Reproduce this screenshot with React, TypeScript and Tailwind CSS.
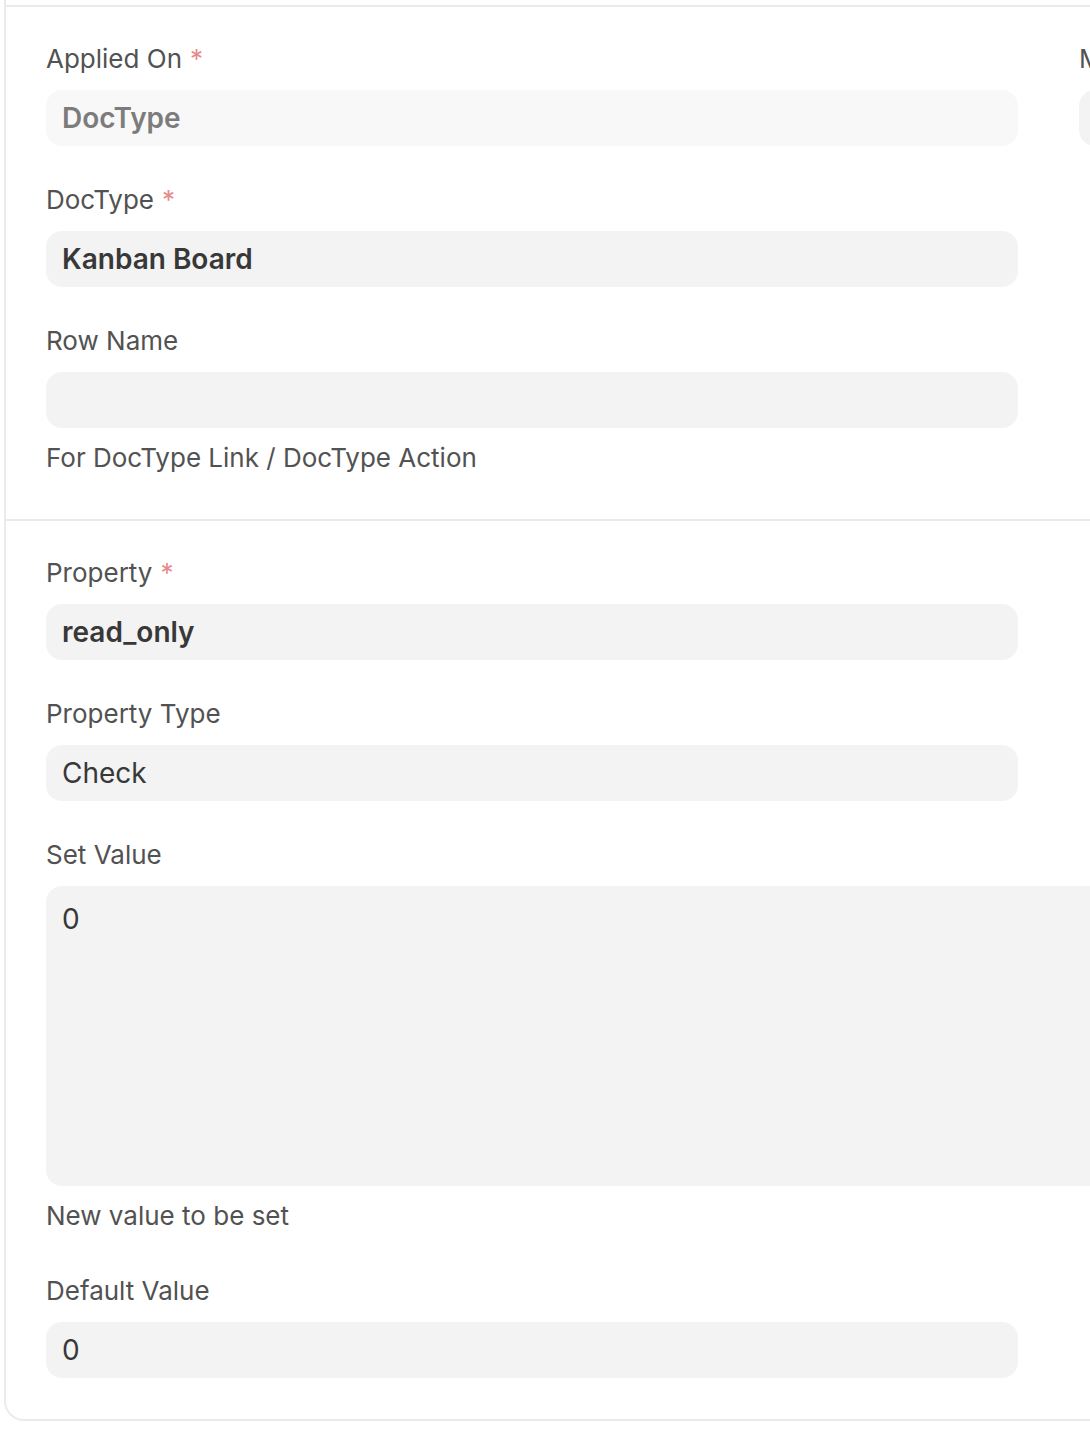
import React from "react";

const font = { fontFamily: "Inter, 'Noto Sans', sans-serif" };

function Label({ text, req }: { text: string; req?: boolean }) {
  return (
    <div className="h-[36px] leading-[36px] text-[26px] text-[#525252] mb-[13px] whitespace-nowrap">
      {text}
      {req && <span className="text-[#e58b8b] ml-[8px]">*</span>}
    </div>
  );
}

function Input({ value, variant }: { value?: string; variant?: "disabled" | "bold" | "normal" }) {
  const cls =
    variant === "disabled"
      ? "bg-[#f8f8f8] text-[#7c7c7c] font-semibold"
      : variant === "bold"
      ? "bg-[#f3f3f3] text-[#383838] font-semibold"
      : "bg-[#f3f3f3] text-[#383838]";
  return (
    <div className={`h-[56px] rounded-[16px] px-[16px] flex items-center text-[28px] ${cls}`}>
      {value}
    </div>
  );
}

export default function App() {
  return (
    <div className="w-full min-h-[1440px] overflow-hidden bg-white" style={font}>
      <div className="w-[2100px] ml-[4px] border-l-2 border-b-2 border-[#ebebeb] rounded-bl-[20px]">
        <div className="h-[5px]" />
        {/* Section 1 */}
        <div className="border-t-2 border-[#ebebeb] px-[40px] pt-[34px] pb-[43px] grid grid-cols-[972px_972px] gap-x-[61px]">
          <div>
            <Label text="Applied On" req />
            <Input value="DocType" variant="disabled" />
            <div className="h-[36px]" />
            <Label text="DocType" req />
            <Input value="Kanban Board" variant="bold" />
            <div className="h-[36px]" />
            <Label text="Row Name" />
            <Input />
            <div className="mt-[12px] h-[36px] leading-[36px] text-[26px] text-[#525252]">
              For DocType Link / DocType Action
            </div>
          </div>
          <div>
            <Label text="Module (for export)" />
            <Input variant="normal" />
          </div>
        </div>
        {/* Section 2 */}
        <div className="border-t-2 border-[#ebebeb] px-[40px] pt-[34px] pb-[41px]">
          <div className="w-[972px]">
            <Label text="Property" req />
            <Input value="read_only" variant="bold" />
            <div className="h-[36px]" />
            <Label text="Property Type" />
            <Input value="Check" />
            <div className="h-[36px]" />
            <Label text="Set Value" />
          </div>
          <div className="w-[2005px] h-[300px] rounded-[16px] bg-[#f3f3f3] px-[16px] pt-[15px] text-[28px] leading-[36px] text-[#383838]">
            0
          </div>
          <div className="w-[972px]">
            <div className="mt-[12px] h-[36px] leading-[36px] text-[26px] text-[#525252]">
              New value to be set
            </div>
            <div className="h-[39px]" />
            <Label text="Default Value" />
            <Input value="0" />
          </div>
        </div>
      </div>
    </div>
  );
}
